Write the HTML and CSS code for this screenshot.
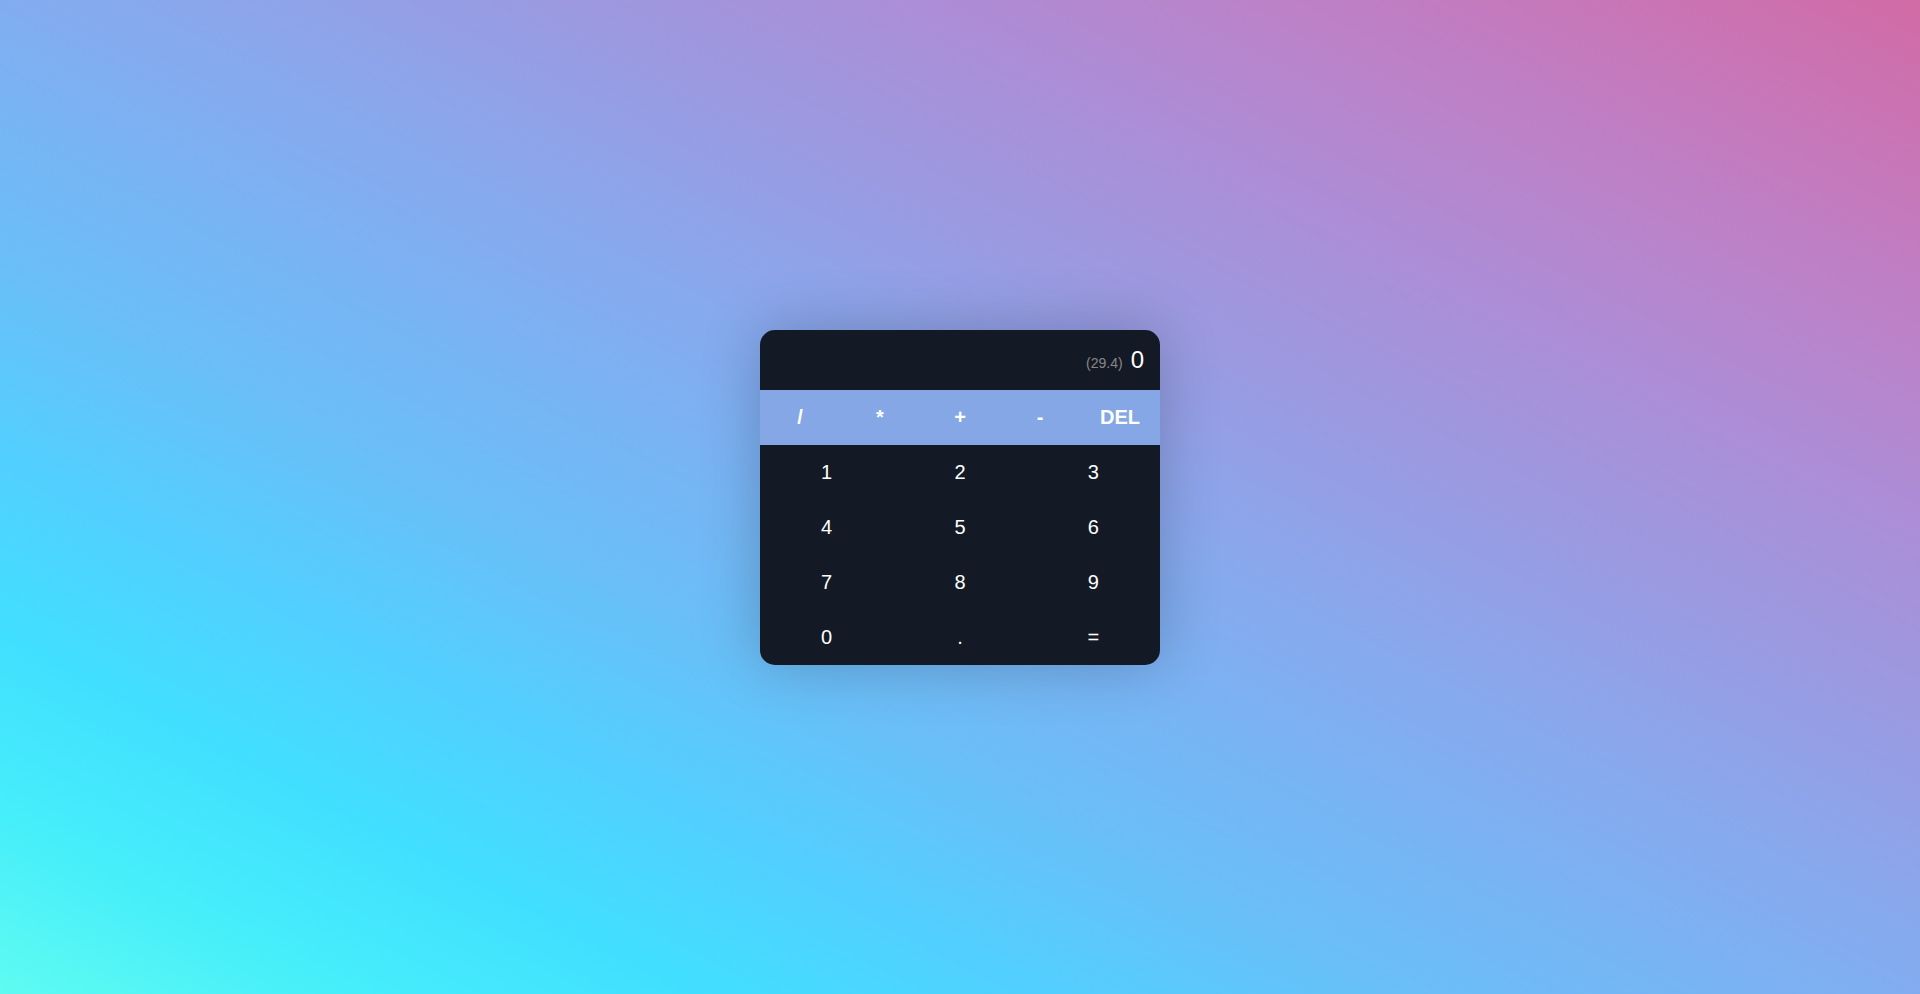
FILE: index.html
```html
<!DOCTYPE html>
<html lang="en">
<head>
<meta charset="utf-8">
<title>Calculator</title>
<link rel="stylesheet" href="styles.css">
</head>
<body>
<div class="calculator">
  <div class="display">
    <span class="preview">(29.4)</span>
    <span class="current">0</span>
  </div>
  <div class="operators">
    <button class="op">/</button>
    <button class="op">*</button>
    <button class="op">+</button>
    <button class="op">-</button>
    <button class="op">DEL</button>
  </div>
  <div class="digits">
    <button class="key">1</button>
    <button class="key">2</button>
    <button class="key">3</button>
    <button class="key">4</button>
    <button class="key">5</button>
    <button class="key">6</button>
    <button class="key">7</button>
    <button class="key">8</button>
    <button class="key">9</button>
    <button class="key">0</button>
    <button class="key">.</button>
    <button class="key">=</button>
  </div>
</div>
</body>
</html>
```
FILE: styles.css
```css
* {
  box-sizing: border-box;
}

html, body {
  margin: 0;
  height: 100%;
}

body {
  display: flex;
  align-items: center;
  justify-content: center;
  font-family: "Liberation Sans", Arial, sans-serif;
  background-image: linear-gradient(to left bottom, #d16ba5, #c777b9, #ba83ca, #aa8fd8, #9a9ae1, #8aa7ec, #79b3f4, #69bff8, #52cffe, #41dfff, #46eefa, #5ffbf1);
}

.calculator {
  width: 400px;
  background: #131a26;
  border-radius: 15px;
  overflow: hidden;
  box-shadow: 0 0 60px rgba(0, 0, 0, 0.22);
}

.display {
  height: 60px;
  display: flex;
  align-items: center;
  justify-content: flex-end;
  gap: 8px;
  padding: 0 16px;
  color: #fff;
}

.preview {
  font-size: 14px;
  color: #888;
  margin-top: 6px;
}

.current {
  font-size: 24px;
}

.operators {
  display: grid;
  grid-template-columns: repeat(5, 1fr);
  background: #85a7e6;
}

.op {
  height: 55px;
  border: none;
  background: transparent;
  color: #fff;
  font-family: inherit;
  font-size: 20px;
  font-weight: bold;
  padding: 0;
}

.digits {
  display: grid;
  grid-template-columns: repeat(3, 1fr);
}

.key {
  height: 55px;
  border: none;
  background: transparent;
  color: #fff;
  font-family: inherit;
  font-size: 20px;
  padding: 0;
}
```
